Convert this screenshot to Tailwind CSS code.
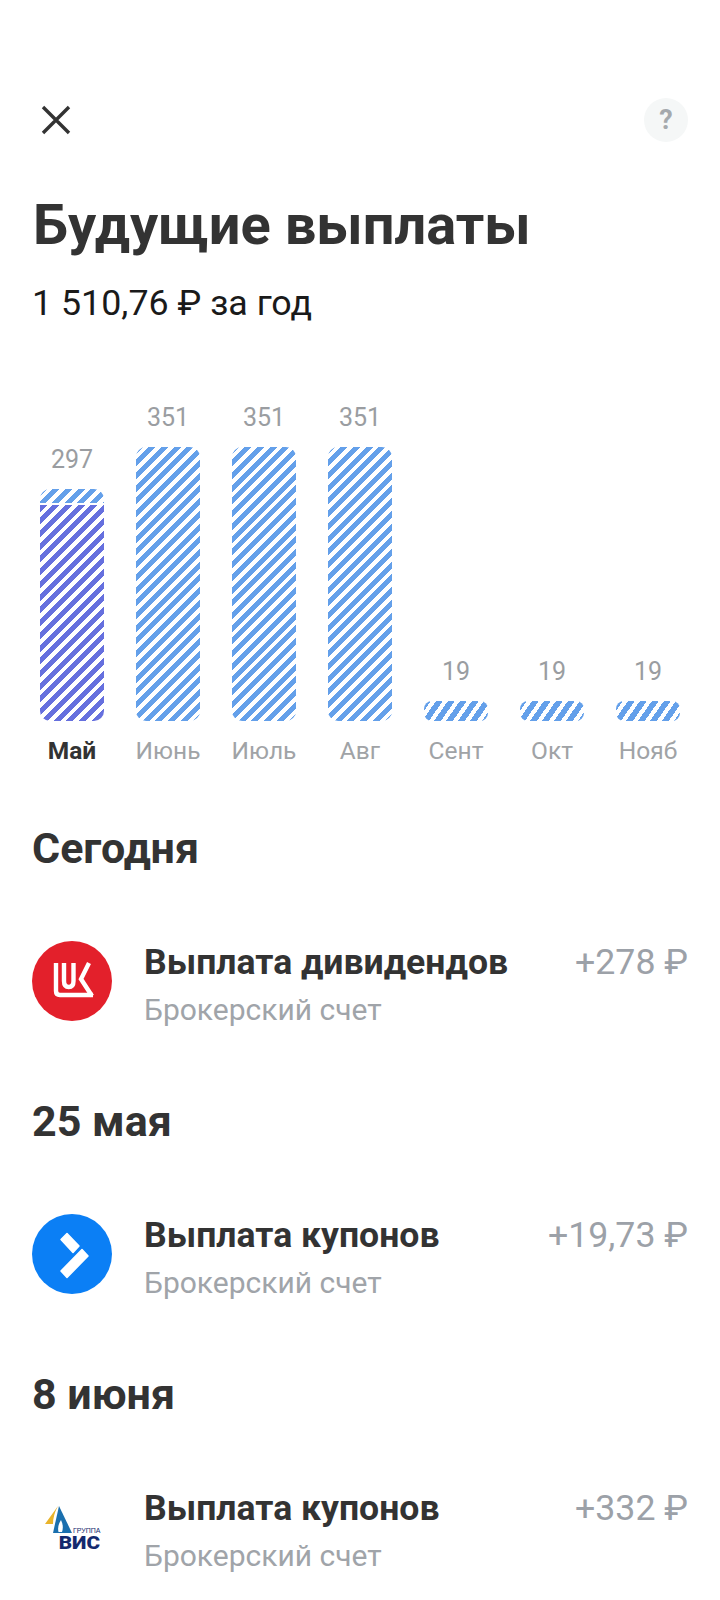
<!DOCTYPE html>
<html lang="ru">
<head>
  <meta charset="UTF-8" />
  <title>Будущие выплаты</title>
  <meta name="viewport" content="width=device-width, initial-scale=1.0" />
  <script src="https://cdn.jsdelivr.net/npm/@tailwindcss/browser@4"></script>
</head>
<body class="bg-white font-['Roboto',sans-serif] w-[720px] h-[1600px] overflow-hidden">

  <!-- top bar -->
  <div class="flex items-center justify-between pl-[40px] pr-[32px] pt-[98px] h-[142px]">
    <svg class="w-[32px] h-[32px]" viewBox="0 0 32 32" fill="none" stroke="#333" stroke-width="3.4"><path d="M3 3l26 26M29 3L3 29"/></svg>
    <div class="w-[44px] h-[44px] rounded-full bg-[#f5f7f7] flex items-center justify-center text-[#a5a9ad] font-bold text-[27px]">?</div>
  </div>

  <h1 class="px-[33px] mt-[47px] text-[56px] leading-[72px] font-bold text-[#333]">Будущие выплаты</h1>
  <p class="px-[32px] mt-[20px] text-[35.8px] leading-[44px] text-[#1a1a1a]">1 510,76 ₽ за год</p>

  <!-- chart -->
  <div class="flex gap-[32px] px-[40px] items-end mt-[64px] h-[332px]">
    <div class="w-[64px] flex flex-col items-center">
      <span class="text-[25px] leading-[28px] text-[#9a9da1] mb-[15px]">297</span>
      <div class="w-[64px] h-[232px] rounded-[10px] overflow-hidden flex flex-col">
        <div class="h-[14px] bg-[repeating-linear-gradient(135deg,#64a0ea_0,#64a0ea_5px,#fff_5px,#fff_9px)]"></div>
        <div class="h-[2px] bg-white"></div>
        <div class="flex-1 bg-[repeating-linear-gradient(135deg,#6670de_0,#6670de_5px,#fff_5px,#fff_9px)]"></div>
      </div>
    </div>
    <div class="w-[64px] flex flex-col items-center">
      <span class="text-[25px] leading-[28px] text-[#9a9da1] mb-[15px]">351</span>
      <div class="w-[64px] h-[274px] rounded-[10px] bg-[repeating-linear-gradient(135deg,#64a0ea_0,#64a0ea_5px,#fff_5px,#fff_9px)]"></div>
    </div>
    <div class="w-[64px] flex flex-col items-center">
      <span class="text-[25px] leading-[28px] text-[#9a9da1] mb-[15px]">351</span>
      <div class="w-[64px] h-[274px] rounded-[10px] bg-[repeating-linear-gradient(135deg,#64a0ea_0,#64a0ea_5px,#fff_5px,#fff_9px)]"></div>
    </div>
    <div class="w-[64px] flex flex-col items-center">
      <span class="text-[25px] leading-[28px] text-[#9a9da1] mb-[15px]">351</span>
      <div class="w-[64px] h-[274px] rounded-[10px] bg-[repeating-linear-gradient(135deg,#64a0ea_0,#64a0ea_5px,#fff_5px,#fff_9px)]"></div>
    </div>
    <div class="w-[64px] flex flex-col items-center">
      <span class="text-[25px] leading-[28px] text-[#9a9da1] mb-[15px]">19</span>
      <div class="w-[64px] h-[20px] rounded-[8px] bg-[repeating-linear-gradient(125deg,#64a0ea_0,#64a0ea_5.6px,#fff_5.6px,#fff_9.8px)]"></div>
    </div>
    <div class="w-[64px] flex flex-col items-center">
      <span class="text-[25px] leading-[28px] text-[#9a9da1] mb-[15px]">19</span>
      <div class="w-[64px] h-[20px] rounded-[8px] bg-[repeating-linear-gradient(125deg,#64a0ea_0,#64a0ea_5.6px,#fff_5.6px,#fff_9.8px)]"></div>
    </div>
    <div class="w-[64px] flex flex-col items-center">
      <span class="text-[25px] leading-[28px] text-[#9a9da1] mb-[15px]">19</span>
      <div class="w-[64px] h-[20px] rounded-[8px] bg-[repeating-linear-gradient(125deg,#64a0ea_0,#64a0ea_5.6px,#fff_5.6px,#fff_9.8px)]"></div>
    </div>
  </div>
  <div class="flex gap-[32px] px-[40px] mt-[16px] text-[24.5px] leading-[28px] text-[#a0a3a6] text-center">
    <span class="w-[64px] font-bold text-[#333]">Май</span>
    <span class="w-[64px] whitespace-nowrap flex justify-center">Июнь</span>
    <span class="w-[64px] whitespace-nowrap flex justify-center">Июль</span>
    <span class="w-[64px] whitespace-nowrap flex justify-center">Авг</span>
    <span class="w-[64px] whitespace-nowrap flex justify-center">Сент</span>
    <span class="w-[64px] whitespace-nowrap flex justify-center">Окт</span>
    <span class="w-[64px] whitespace-nowrap flex justify-center">Нояб</span>
  </div>

  <!-- today -->
  <h2 class="px-[32px] mt-[55px] text-[43px] leading-[56px] font-bold text-[#333]">Сегодня</h2>
  <div class="flex items-center px-[32px] mt-[65px] h-[80px]">
    <div class="w-[80px] h-[80px] rounded-full bg-[#e3202b] flex items-center justify-center shrink-0">
      <svg class="w-[48px] h-[48px]" viewBox="0 0 48 48" fill="none" stroke="#fff" stroke-width="4.4">
        <path d="M8 6v28q0 4 4 4h33"/>
        <path d="M16 6v18q0 6 4.750 6t4.750-6V6"/>
        <path d="M41 6L33 22 44 39"/>
      </svg>
    </div>
    <div class="ml-[32px] flex-1 pt-[6px]">
      <div class="text-[35.6px] leading-[44px] font-bold text-[#333]">Выплата дивидендов</div>
      <div class="text-[30px] leading-[36px] mt-[8px] text-[#a0a4a9]">Брокерский счет</div>
    </div>
    <div class="self-start -mt-[1px] text-[35.7px] leading-[44px] text-[#9ca1a8]">+278 ₽</div>
  </div>

  <h2 class="px-[32px] mt-[72px] text-[43px] leading-[56px] font-bold text-[#333]">25 мая</h2>
  <div class="flex items-center px-[32px] mt-[65px] h-[80px]">
    <div class="w-[80px] h-[80px] rounded-full bg-[#0b7ff5] shrink-0">
      <svg class="w-[80px] h-[80px]" viewBox="0 0 80 80" fill="#fff" stroke="#fff" stroke-width="1.5" stroke-linejoin="round">
        <path d="M29 25.500L35 19.500 47 32 41 38.500z"/>
        <path d="M29 57L50 35.500 56 42 35 63.500z"/>
      </svg>
    </div>
    <div class="ml-[32px] flex-1 pt-[6px]">
      <div class="text-[35.6px] leading-[44px] font-bold text-[#333]">Выплата купонов</div>
      <div class="text-[30px] leading-[36px] mt-[8px] text-[#a0a4a9]">Брокерский счет</div>
    </div>
    <div class="self-start -mt-[1px] text-[35.7px] leading-[44px] text-[#9ca1a8]">+19,73 ₽</div>
  </div>

  <h2 class="px-[32px] mt-[72px] text-[43px] leading-[56px] font-bold text-[#333]">8 июня</h2>
  <div class="flex items-center px-[32px] mt-[65px] h-[80px]">
    <div class="w-[80px] h-[80px] shrink-0 flex flex-col justify-center pl-[13px]">
      <div class="flex items-end w-[55px]">
        <svg class="w-[28px] h-[28px] shrink-0" viewBox="0 0 28 28">
          <path d="M0 18L13 0Q8 9 8 18z" fill="#e9b32a"/>
          <path d="M14 0L27 27H8z" fill="#1a6fae"/>
          <path d="M16 14q-4 6-2.500 12h3.500q2-6-1-12z" fill="#fff"/>
        </svg>
        <span class="text-[7px] leading-[7px] text-[#14296e] font-['Liberation_Sans',sans-serif] whitespace-nowrap">ГРУППА</span>
      </div>
      <div class="w-[55px] mt-[3px] text-right font-black text-[18px] leading-[12px] text-[#14296e] scale-x-[1.15] origin-right">ВИС</div>
    </div>
    <div class="ml-[32px] flex-1 pt-[6px]">
      <div class="text-[35.6px] leading-[44px] font-bold text-[#333]">Выплата купонов</div>
      <div class="text-[30px] leading-[36px] mt-[8px] text-[#a0a4a9]">Брокерский счет</div>
    </div>
    <div class="self-start -mt-[1px] text-[35.7px] leading-[44px] text-[#9ca1a8]">+332 ₽</div>
  </div>
</body>
</html>
